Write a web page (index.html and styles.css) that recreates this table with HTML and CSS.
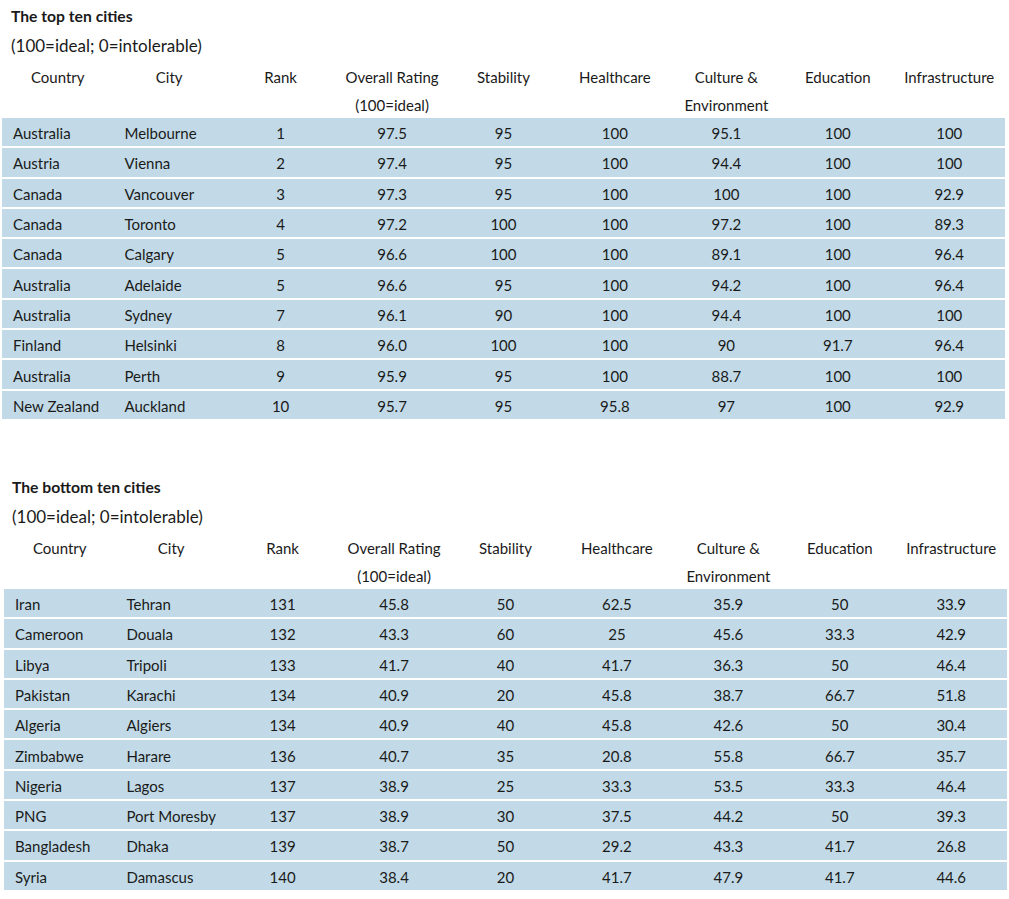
FILE: index.html
```html
<!DOCTYPE html>
<html>
<head>
<meta charset="utf-8">
<link rel="stylesheet" href="styles.css">
</head>
<body>
<section class="block block-top">
  <h2 class="title">The top ten cities</h2>
  <p class="subtitle">(100=ideal; 0=intolerable)</p>
  <table class="cities">
    <thead>
      <tr><th><span class="hd">Country</span></th><th><span class="hd">City</span></th><th><span class="hd">Rank</span></th><th><span class="hd">Overall Rating<br>(100=ideal)</span></th><th><span class="hd">Stability</span></th><th><span class="hd">Healthcare</span></th><th><span class="hd">Culture &amp;<br>Environment</span></th><th><span class="hd">Education</span></th><th><span class="hd">Infrastructure</span></th></tr>
    </thead>
    <tbody>
      <tr><td>Australia</td><td>Melbourne</td><td>1</td><td>97.5</td><td>95</td><td>100</td><td>95.1</td><td>100</td><td>100</td></tr>
      <tr><td>Austria</td><td>Vienna</td><td>2</td><td>97.4</td><td>95</td><td>100</td><td>94.4</td><td>100</td><td>100</td></tr>
      <tr><td>Canada</td><td>Vancouver</td><td>3</td><td>97.3</td><td>95</td><td>100</td><td>100</td><td>100</td><td>92.9</td></tr>
      <tr><td>Canada</td><td>Toronto</td><td>4</td><td>97.2</td><td>100</td><td>100</td><td>97.2</td><td>100</td><td>89.3</td></tr>
      <tr><td>Canada</td><td>Calgary</td><td>5</td><td>96.6</td><td>100</td><td>100</td><td>89.1</td><td>100</td><td>96.4</td></tr>
      <tr><td>Australia</td><td>Adelaide</td><td>5</td><td>96.6</td><td>95</td><td>100</td><td>94.2</td><td>100</td><td>96.4</td></tr>
      <tr><td>Australia</td><td>Sydney</td><td>7</td><td>96.1</td><td>90</td><td>100</td><td>94.4</td><td>100</td><td>100</td></tr>
      <tr><td>Finland</td><td>Helsinki</td><td>8</td><td>96.0</td><td>100</td><td>100</td><td>90</td><td>91.7</td><td>96.4</td></tr>
      <tr><td>Australia</td><td>Perth</td><td>9</td><td>95.9</td><td>95</td><td>100</td><td>88.7</td><td>100</td><td>100</td></tr>
      <tr><td>New Zealand</td><td>Auckland</td><td>10</td><td>95.7</td><td>95</td><td>95.8</td><td>97</td><td>100</td><td>92.9</td></tr>
    </tbody>
  </table>
</section>
<section class="block block-bottom">
  <h2 class="title">The bottom ten cities</h2>
  <p class="subtitle">(100=ideal; 0=intolerable)</p>
  <table class="cities">
    <thead>
      <tr><th><span class="hd">Country</span></th><th><span class="hd">City</span></th><th><span class="hd">Rank</span></th><th><span class="hd">Overall Rating<br>(100=ideal)</span></th><th><span class="hd">Stability</span></th><th><span class="hd">Healthcare</span></th><th><span class="hd">Culture &amp;<br>Environment</span></th><th><span class="hd">Education</span></th><th><span class="hd">Infrastructure</span></th></tr>
    </thead>
    <tbody>
      <tr><td>Iran</td><td>Tehran</td><td>131</td><td>45.8</td><td>50</td><td>62.5</td><td>35.9</td><td>50</td><td>33.9</td></tr>
      <tr><td>Cameroon</td><td>Douala</td><td>132</td><td>43.3</td><td>60</td><td>25</td><td>45.6</td><td>33.3</td><td>42.9</td></tr>
      <tr><td>Libya</td><td>Tripoli</td><td>133</td><td>41.7</td><td>40</td><td>41.7</td><td>36.3</td><td>50</td><td>46.4</td></tr>
      <tr><td>Pakistan</td><td>Karachi</td><td>134</td><td>40.9</td><td>20</td><td>45.8</td><td>38.7</td><td>66.7</td><td>51.8</td></tr>
      <tr><td>Algeria</td><td>Algiers</td><td>134</td><td>40.9</td><td>40</td><td>45.8</td><td>42.6</td><td>50</td><td>30.4</td></tr>
      <tr><td>Zimbabwe</td><td>Harare</td><td>136</td><td>40.7</td><td>35</td><td>20.8</td><td>55.8</td><td>66.7</td><td>35.7</td></tr>
      <tr><td>Nigeria</td><td>Lagos</td><td>137</td><td>38.9</td><td>25</td><td>33.3</td><td>53.5</td><td>33.3</td><td>46.4</td></tr>
      <tr><td>PNG</td><td>Port Moresby</td><td>137</td><td>38.9</td><td>30</td><td>37.5</td><td>44.2</td><td>50</td><td>39.3</td></tr>
      <tr><td>Bangladesh</td><td>Dhaka</td><td>139</td><td>38.7</td><td>50</td><td>29.2</td><td>43.3</td><td>41.7</td><td>26.8</td></tr>
      <tr><td>Syria</td><td>Damascus</td><td>140</td><td>38.4</td><td>20</td><td>41.7</td><td>47.9</td><td>41.7</td><td>44.6</td></tr>
    </tbody>
  </table>
</section>
</body>
</html>
```

FILE: styles.css
```css
html, body {
  margin: 0;
  padding: 0;
  background: #ffffff;
}
body {
  font-family: Lato, "Open Sans", "Liberation Sans", sans-serif;
  font-size: 15px;
  color: #1a1a1a;
}
.block {
  padding-left: 2px;
}
.block-top {
  padding-top: 2px;
}
.block-bottom {
  margin-top: 54px;
  padding-left: 4px;
}
.title {
  margin: 0 0 0 9px;
  font-size: 15.7px;
  font-weight: 700;
  line-height: 29px;
}
.subtitle {
  margin: 0 0 0 9px;
  font-size: 17px;
  line-height: 29px;
}
.block-bottom .title,
.block-bottom .subtitle {
  margin-left: 8px;
}
.cities {
  width: 1003px;
  table-layout: fixed;
  border-collapse: collapse;
}
.cities th {
  font-weight: 400;
  text-align: center;
  line-height: 28px;
  padding: 3px 0 0;
  vertical-align: top;
}
.hd {
  display: block;
  margin-bottom: -3px;
}
.cities td {
  background: #c2dae7;
  border-top: 2px solid #ffffff;
  height: 26.3px;
  padding: 2px 0 0;
  text-align: center;
  vertical-align: middle;
  line-height: 20px;
}
.cities td:nth-child(1),
.cities td:nth-child(2) {
  text-align: left;
  padding-left: 11px;
}
```
